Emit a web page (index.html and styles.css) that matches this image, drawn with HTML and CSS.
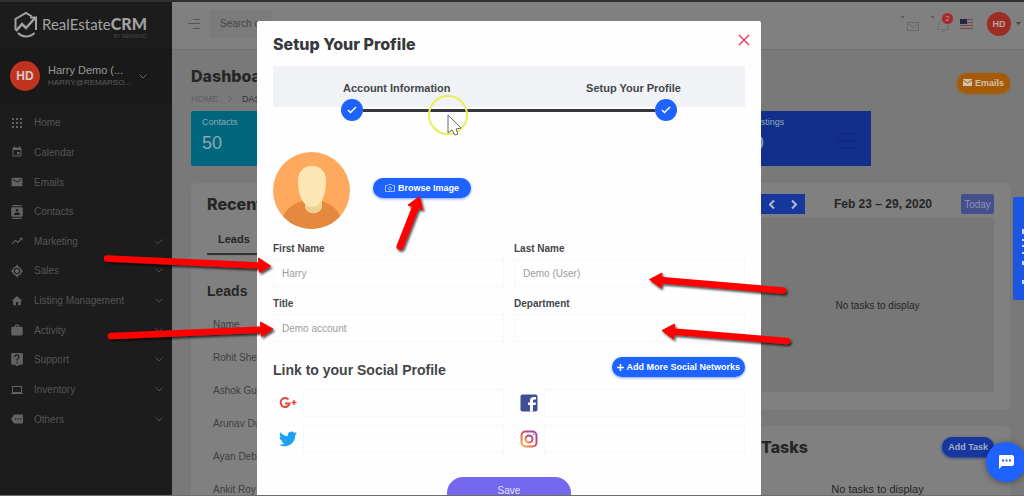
FILE: index.html
```html
<!DOCTYPE html>
<html lang="en">
<head>
  <meta charset="UTF-8">
  <meta name="viewport" content="width=device-width, initial-scale=1.0">
  <title>RealEstateCRM - Dashboard</title>
  <link rel="stylesheet" href="styles.css">
</head>
<body>
  <div class="screen">
    <aside class="sidebar">
      <a class="logo" href="#">
        <svg width="24" height="28" viewBox="0 0 24 28" fill="none" stroke="#a2a2a2" stroke-width="2">
          <path d="M1.5 19V8L12 2l6 3.500M22 10v9M4 22c4 4.500 12 4.500 16.500 0"/>
          <path d="M2 20l6-7 4 4L21 7" stroke-width="2.500"/>
          <path d="M16 6.500h6v6" stroke-width="2"/>
        </svg>
        <span class="logo-text">
          <span class="logo-name">RealEstate<b>CRM</b></span>
          <small>BY REMARSO</small>
        </span>
      </a>
      <div class="user">
        <span class="avatar">HD</span>
        <div class="user-info">
          <div class="user-name">Harry Demo (...</div>
          <div class="user-mail">HARRY@REMARSO...</div>
        </div>
        <svg class="chevron" width="8" height="5" viewBox="0 0 8 5"><path d="M.5.5L4 4 7.500.5"/></svg>
      </div>
      <nav class="menu">
        <a href="#"><svg width="12" height="12" viewBox="0 0 12 12"><path d="M1 1h2v2H1zM5 1h2v2H5zM9 1h2v2H9zM1 5h2v2H1zM5 5h2v2H5zM9 5h2v2H9zM1 9h2v2H1zM5 9h2v2H5zM9 9h2v2H9z"/></svg><span>Home</span></a>
        <a href="#"><svg width="12" height="12" viewBox="0 0 24 24"><path d="M17 12h-5v5h5v-5zM16 1v2H8V1H6v2H5c-1.100 0-2 .9-2 2v14c0 1.100.9 2 2 2h14c1.100 0 2-.9 2-2V5c0-1.100-.9-2-2-2h-1V1h-2zm3 18H5V8h14v11z"/></svg><span>Calendar</span></a>
        <a href="#"><svg width="12" height="12" viewBox="1 2 22 20"><path d="M20 4H4c-1.100 0-2 .9-2 2v12c0 1.100.9 2 2 2h16c1.100 0 2-.9 2-2V6c0-1.100-.9-2-2-2zm0 4l-8 5-8-5V6l8 5 8-5v2z"/></svg><span>Emails</span></a>
        <a href="#"><svg width="12" height="14" viewBox="2 0 20 24"><path d="M20 0H4v2h16V0zM4 24h16v-2H4v2zM20 4H4c-1.100 0-2 .9-2 2v12c0 1.100.9 2 2 2h16c1.100 0 2-.9 2-2V6c0-1.100-.9-2-2-2zm-8 2.750a2.250 2.250 0 110 4.500 2.250 2.250 0 010-4.500zM17 17H7v-1.500c0-1.670 3.330-2.500 5-2.500s5 .83 5 2.500V17z"/></svg><span>Contacts</span></a>
        <a href="#"><svg width="12" height="12" viewBox="1 2 22 20"><path d="M16 6l2.290 2.290-4.880 4.880-4-4L2 16.590 3.410 18l6-6 4 4 6.300-6.290L22 12V6z"/></svg><span>Marketing</span><svg class="chevron" width="8" height="5" viewBox="0 0 8 5"><path d="M.5 2.500L3 4.500 7.500.5"/></svg></a>
        <a href="#"><svg width="12" height="14" viewBox="1 0 22 24"><path fill-rule="evenodd" d="M12 0l3 4c3 1 4 2 5 5l3 3-3 3c-1 3-2 4-5 5l-3 4-3-4c-3-1-4-2-5-5l-3-3 3-3c1-3 2-4 5-5zM12 6a6 6 0 100 12 6 6 0 000-12z"/><circle cx="12" cy="12" r="4"/></svg><span>Sales</span><svg class="chevron" width="8" height="5" viewBox="0 0 8 5"><path d="M.5.5L4 4 7.500.5"/></svg></a>
        <a href="#"><svg width="12" height="12" viewBox="1 2 22 20"><path d="M10 20v-6h4v6h5v-8h3L12 3 2 12h3v8z"/></svg><span>Listing Management</span><svg class="chevron" width="8" height="5" viewBox="0 0 8 5"><path d="M.5.5L4 4 7.500.5"/></svg></a>
        <a href="#"><svg width="12" height="12" viewBox="2 1 20 21"><path d="M20 6h-4V4l-2-2h-4L8 4v2H4c-1 0-2 1-2 2v11c0 1 1 2 2 2h16c1 0 2-1 2-2V8c0-1-1-2-2-2zm-6 0h-4V4h4v2z"/></svg><span>Activity</span><svg class="chevron" width="8" height="5" viewBox="0 0 8 5"><path d="M.5.5L4 4 7.500.5"/></svg></a>
        <a href="#"><svg width="12" height="13" viewBox="3 2 18 20"><path d="M19 2H5c-1.100 0-2 .9-2 2v14c0 1.100.9 2 2 2h4l3 3 3-3h4c1.100 0 2-.9 2-2V4c0-1.100-.9-2-2-2zm-6 16h-2v-2h2v2zm2.070-7.750l-.9.920C13.450 11.900 13 12.500 13 14h-2v-.5c0-1.100.45-2.100 1.170-2.830l1.240-1.260A2 2 0 1010 8H8a4 4 0 118 0c0 .88-.36 1.680-.93 2.250z"/></svg><span>Support</span><svg class="chevron" width="8" height="5" viewBox="0 0 8 5"><path d="M.5.5L4 4 7.500.5"/></svg></a>
        <a href="#"><svg width="12" height="12" viewBox="0 3 24 18"><path d="M20 18c1.100 0 2-.9 2-2V6c0-1.100-.9-2-2-2H4c-1.100 0-2 .9-2 2v10c0 1.100.9 2 2 2H0v2h24v-2h-4zM4 6h16v10H4V6z"/></svg><span>Inventory</span><svg class="chevron" width="8" height="5" viewBox="0 0 8 5"><path d="M.5.5L4 4 7.500.5"/></svg></a>
        <a href="#"><svg width="12" height="12" viewBox="0 3 24 18"><path d="M22 3H7c-.69 0-1.230.35-1.590.88L0 12l5.410 8.110c.36.53.9.89 1.590.89h15c1.100 0 2-.9 2-2V5c0-1.100-.9-2-2-2zM9 13.500a1.500 1.500 0 110-3 1.500 1.500 0 010 3zm5 0a1.500 1.500 0 110-3 1.500 1.500 0 010 3zm5 0a1.500 1.500 0 110-3 1.500 1.500 0 010 3z"/></svg><span>Others</span><svg class="chevron" width="8" height="5" viewBox="0 0 8 5"><path d="M.5.5L4 4 7.500.5"/></svg></a>
      </nav>
    </aside>

    <div class="page">
      <header class="topbar">
        <button class="icon-btn" aria-label="Toggle menu">
          <svg width="13" height="12" viewBox="0 0 13 12" stroke="#555" fill="none"><path d="M5 1.500h7M0 5.500h12M5 10.500h7"/></svg>
        </button>
        <input class="search" type="search" placeholder="Search c" aria-label="Search">
        <div class="topbar-icons">
          <button class="icon-btn" aria-label="Messages">
            <svg width="20" height="20" viewBox="0 0 20 20" fill="none" stroke="#6a6a6a"><path d="M7.500 8.500h11v8h-11zM7.500 9l5.500 4.500L18.500 9"/><path d="M1 3h3" stroke="#444"/></svg>
          </button>
          <button class="icon-btn bell" aria-label="Notifications">
            <svg width="22" height="20" viewBox="0 0 22 20" fill="none" stroke="#6f6f6f"><path d="M7 15.500c2-2 1-6 3-8s6-2 7 0 0 6 2 8zM11.500 17.500h3"/><path d="M1 3h3" stroke="#444"/></svg>
            <span class="badge">2</span>
          </button>
          <svg width="13" height="10" viewBox="0 0 13 10"><path fill="#857c7c" d="M0 0h13v10H0z"/><path stroke="#744a4e" d="M0 .5h13M0 3.500h13M0 6.500h13M0 9.500h13"/><path fill="#22263f" d="M0 0h7v5H0z"/></svg>
          <span class="avatar small">HD</span>
          <svg width="5" height="3" viewBox="0 0 5 3"><path fill="#444" d="M0 0h5L2.500 3z"/></svg>
        </div>
      </header>

      <main class="content">
        <div class="page-head">
          <div>
            <h1>Dashboard</h1>
            <div class="breadcrumb">
              <a href="#">HOME</a>
              <svg width="4" height="7" viewBox="0 0 4 7" fill="none" stroke="#5c5c5c"><path d="M.5.5l3 3-3 3"/></svg>
              <span>DASHBOARD</span>
            </div>
          </div>
          <button class="pill orange">
            <svg width="9" height="7" viewBox="0 0 9 7"><path fill="#cfc3b2" d="M0 0h9v7H0z"/><path fill="none" stroke="#a65a05" d="M0 1l4.500 3L9 1"/></svg>
            Emails
          </button>
        </div>

        <div class="stats">
          <div class="stat teal"><span>Contacts</span><strong>50</strong></div>
          <div class="stat blue">
            <span>Listings</span><strong>0</strong>
            <svg width="20" height="18" viewBox="0 0 20 18" stroke="#11297a" stroke-width="2"><path d="M2 2h18M0 9h20M2 16h18"/></svg>
          </div>
        </div>

        <div class="columns">
          <section class="card recent">
            <h2>Recent</h2>
            <div class="tabs"><button class="tab">Leads</button></div>
            <h3>Leads</h3>
            <table>
              <thead><tr><th>Name</th></tr></thead>
              <tbody>
                <tr><td>Rohit Sheth</td></tr>
                <tr><td>Ashok Gupta</td></tr>
                <tr><td>Arunav Dutta</td></tr>
                <tr><td>Ayan Debnath</td></tr>
                <tr><td>Ankit Roy</td></tr>
              </tbody>
            </table>
          </section>
          <div class="side">
            <section class="card">
              <div class="cal-bar">
                <div class="cal-nav">
                  <button aria-label="Previous week"><svg width="6" height="9" viewBox="0 0 6 9"><path d="M5 .5l-4 4 4 4"/></svg></button>
                  <button aria-label="Next week"><svg width="6" height="9" viewBox="0 0 6 9"><path d="M1 .5l4 4-4 4"/></svg></button>
                </div>
                <span class="cal-title">Feb 23 – 29, 2020</span>
                <button class="today">Today</button>
              </div>
              <div class="cal-body">No tasks to display</div>
            </section>
            <section class="card tasks">
              <div class="tasks-head">
                <h2>Tasks</h2>
                <button class="pill dim">Add Task</button>
              </div>
              <p>No tasks to display</p>
            </section>
          </div>
        </div>
      </main>
    </div>

    <div class="side-tab">
      <svg width="3" height="60" viewBox="0 0 3 60" stroke="#c5d3ff" stroke-width="2"><path d="M2 2v5M2 12v2M2 18v2M1 26h2M2 34v4M2 53v4"/></svg>
    </div>
    <button class="chat" aria-label="Chat">
      <svg width="16" height="14" viewBox="0 0 16 14"><path fill="#fff" d="M2 0h12c1 0 2 1 2 2v7c0 1-1 2-2 2H4l-3 3V2c0-1 0-2 1-2z"/><path stroke="#1e62ff" stroke-width="2" d="M4 5.500h2M7.500 5.500h2M11 5.500h2"/></svg>
    </button>

    <div class="overlay">
      <form class="modal" role="dialog" aria-labelledby="modal-title">
        <div class="modal-head">
          <h2 id="modal-title">Setup Your Profile</h2>
          <button type="button" class="close" aria-label="Close">
            <svg width="12" height="12" viewBox="0 0 12 12" stroke="#e5406b" stroke-width="1.500"><path d="M1 1l10 10M11 1L1 11"/></svg>
          </button>
        </div>

        <div class="steps">
          <div class="step-labels"><span>Account Information</span><span>Setup Your Profile</span></div>
          <div class="track">
            <span class="dot"><svg width="10" height="8" viewBox="0 0 10 8"><path d="M1 4l2.500 2.500L9 1"/></svg></span>
            <span class="line"></span>
            <span class="dot"><svg width="10" height="8" viewBox="0 0 10 8"><path d="M1 4l2.500 2.500L9 1"/></svg></span>
          </div>
        </div>

        <div class="photo">
          <svg width="77" height="77" viewBox="0 0 77 77">
            <defs><clipPath id="round"><circle cx="38.500" cy="38.500" r="38.500"/></clipPath></defs>
            <g clip-path="url(#round)">
              <path fill="#ffa95e" d="M0 0h77v77H0z"/>
              <path fill="#e5893f" d="M8 77c0-18 10-25 24-29h14c14 4 23 11 23 29z"/>
              <path fill="#efd191" d="M32 46h17v10c-3 7-14 7-17 0z"/>
              <path fill="#fbe6b4" d="M25 29c0-9 5-15 14-15s14 6 14 15c0 14-5 26-14 26S25 43 25 29z"/>
            </g>
          </svg>
          <button type="button" class="pill browse">
            <svg width="10" height="8" viewBox="0 0 10 8" fill="none" stroke="#a5c2ff"><path d="M.5 1.500h2l1-1h3l1 1h2v6h-9z"/><circle cx="5" cy="4.500" r="1.500"/></svg>
            Browse Image
          </button>
        </div>

        <div class="fields">
          <div class="field"><label for="first">First Name</label><input id="first" type="text" value="Harry"></div>
          <div class="field"><label for="last">Last Name</label><input id="last" type="text" value="Demo (User)"></div>
          <div class="field"><label for="job">Title</label><input id="job" type="text" value="Demo account"></div>
          <div class="field"><label for="dept">Department</label><input id="dept" type="text"></div>
        </div>

        <div class="social-head">
          <h3>Link to your Social Profile</h3>
          <button type="button" class="pill">
            <svg width="7" height="7" viewBox="0 0 7 7" stroke="#fff" stroke-width="1.500"><path d="M3.500 0v7M0 3.500h7"/></svg>
            Add More Social Networks
          </button>
        </div>

        <div class="socials">
          <label class="social">
            <svg width="18" height="18" viewBox="0 0 18 18" fill="none" stroke="#dd4b39" stroke-width="2"><path d="M9.500 5.500a4.500 4.500 0 10 1 4H6"/><path d="M12.500 8.500h5M15 6v5" stroke-width="1.500"/></svg>
            <input type="text" aria-label="Google Plus">
          </label>
          <label class="social">
            <svg width="18" height="18" viewBox="0 0 18 18"><rect x=".5" y=".5" width="17" height="17" rx="2" fill="#3f4f96"/><path fill="#fff" d="M10 17.500V11H8V8.500h2V7c0-2.500 1-4 4-4h2v2.500h-1.500c-1 0-1.500.500-1.500 1.500v1.500h3L15.500 11H13v6.500z"/></svg>
            <input type="text" aria-label="Facebook">
          </label>
          <label class="social">
            <svg width="18" height="18" viewBox="0 0 24 24"><path fill="#1da1f2" d="M23.950 4.570a10 10 0 01-2.820.77 4.960 4.960 0 002.160-2.720c-.95.55-2 .95-3.130 1.180a4.920 4.920 0 00-8.380 4.480C7.690 8.090 4.070 6.130 1.640 3.160a4.820 4.820 0 00-.67 2.480c0 1.710.87 3.210 2.190 4.100a4.900 4.900 0 01-2.230-.62v.06a4.920 4.920 0 003.950 4.830 5 5 0 01-2.210.08 4.940 4.940 0 004.600 3.420A9.870 9.870 0 010 19.540a13.990 13.990 0 007.550 2.210c9.050 0 14-7.500 14-13.980 0-.21 0-.42-.02-.63a9.940 9.940 0 002.460-2.550z"/></svg>
            <input type="text" aria-label="Twitter">
          </label>
          <label class="social">
            <svg width="18" height="18" viewBox="0 0 18 18" fill="none" stroke="url(#insta)" stroke-width="2"><defs><linearGradient id="insta" x1="0" y1="1" x2="1" y2="0"><stop offset="0" stop-color="#f9b64a"/><stop offset=".5" stop-color="#dc4a62"/><stop offset="1" stop-color="#8a49b8"/></linearGradient></defs><rect x="1.500" y="1.500" width="15" height="15" rx="4"/><circle cx="9" cy="9" r="3.500"/><circle cx="13.500" cy="4.500" r=".5" stroke-width="1"/></svg>
            <input type="text" aria-label="Instagram">
          </label>
        </div>

        <button type="submit" class="save">Save</button>
      </form>
    </div>

    <svg class="marks" width="1024" height="496" viewBox="0 0 1024 496">
      <defs>
        <filter id="shadow" x="-20%" y="-50%" width="140%" height="200%"><feDropShadow dx="1.500" dy="2" stdDeviation="1" flood-color="#000" flood-opacity=".7"/></filter>
      </defs>
      <circle cx="448" cy="115" r="19" fill="none" stroke="#e9ee5c" stroke-width="2"/>
      <path d="M448 115v18l4-3 3 5 3-1-2-5 5-1z" fill="#fff" stroke="#666"/>
      <g fill="#fe0000" stroke="#fe0000" stroke-linejoin="round" filter="url(#shadow)">
        <g><path d="M107 258.500L260 265.500" stroke-width="6.500" stroke-linecap="round"/><path d="M270.500 266l-12-8 1 14.500z"/></g>
        <g><path d="M111 336L263 329.500" stroke-width="6.500" stroke-linecap="round"/><path d="M273 329l-12.500-7 1 14.500z"/></g>
        <g><path d="M400 246.500L415.500 207" stroke-width="7" stroke-linecap="round"/><path d="M419.500 196.500l-11.500 8.500 14.500 4.500z"/></g>
        <g><path d="M783 290.500L660 280" stroke-width="6.500" stroke-linecap="round"/><path d="M649.500 279.500l12.500-6.500-1 15z"/></g>
        <g><path d="M787 341L673 331.500" stroke-width="6.500" stroke-linecap="round"/><path d="M662 330.500l12.500-6.500-1 15z"/></g>
      </g>
    </svg>
  </div>
</body>
</html>
```
FILE: styles.css
```css
* {
  box-sizing: border-box;
}
body {
  margin: 0;
  font-family: "Liberation Sans", Arial, sans-serif;
  font-size: 10px;
  color: #262626;
}
h1, h2, h3, p {
  margin: 0;
}
h1, h2 {
  font-family: Inter, "Liberation Sans", sans-serif;
  font-weight: 800;
  font-size: 16px;
  line-height: 20px;
}
button {
  font-family: inherit;
  border: none;
  padding: 0;
  background: none;
  cursor: pointer;
}
a {
  color: inherit;
  text-decoration: none;
}
svg {
  flex-shrink: 0;
  display: block;
}
.screen {
  position: relative;
  display: flex;
  height: 100vh;
  overflow: hidden;
  border-top: 2px solid #303030;
  border-bottom: 1px solid #6c6c6c;
  background: #797979;
}

/* sidebar */
.sidebar {
  width: 172px;
  flex-shrink: 0;
  background: #1c1c1c;
}
.logo {
  display: flex;
  gap: 4px;
  height: 46px;
  padding: 9px 0 0 14px;
  color: #a2a2a2;
}
.logo-text {
  display: flex;
  flex-direction: column;
  padding-top: 3px;
}
.logo-name {
  font-family: Lato, sans-serif;
  font-size: 15px;
  line-height: 20px;
}
.logo-name b {
  font-size: 16px;
  font-weight: 900;
}
.logo small {
  font-size: 5px;
  line-height: 4px;
  text-align: right;
  color: #4a4a4a;
}
.user {
  display: flex;
  align-items: center;
  height: 56px;
  padding: 0 25px 0 10px;
  background: #191919;
}
.avatar {
  display: flex;
  align-items: center;
  justify-content: center;
  width: 30px;
  height: 30px;
  border-radius: 50%;
  background: #bf3320;
  color: #d8c8c4;
  font-size: 12px;
  font-weight: bold;
}
.avatar.small {
  width: 24px;
  height: 24px;
  font-size: 9px;
  background: #9c2c24;
  color: #b9a5a2;
}
.user-info {
  flex: 1;
  padding-left: 8px;
}
.user-name {
  font-size: 11px;
  line-height: 14px;
  color: #9a9a9a;
}
.user-mail {
  font-size: 8px;
  line-height: 12px;
  color: #5c5c5c;
}
.chevron {
  fill: none;
  stroke: #6a6a6a;
}
.menu {
  display: grid;
  grid-auto-rows: 1fr;
  height: 326px;
  margin-top: 4px;
}
.menu a {
  display: flex;
  align-items: center;
  gap: 11px;
  padding: 0 9px 0 11px;
  color: #555;
  fill: #626262;
}
.menu span {
  flex: 1;
}
.menu .chevron {
  fill: none;
  stroke: #505050;
}

/* top bar */
.page {
  flex: 1;
  min-width: 0;
}
.topbar {
  display: flex;
  align-items: center;
  height: 48px;
  padding: 0 3px 4px 16px;
  background: #808080;
  border-bottom: 1px solid #6f6f6f;
}
.icon-btn {
  position: relative;
}
.search {
  width: 64px;
  height: 28px;
  margin-left: 8px;
  padding: 0 0 0 11px;
  border: none;
  border-radius: 4px;
  background: #7b7b7b;
  font-family: inherit;
  font-size: 10px;
}
.search::placeholder {
  color: #444;
}
.topbar-icons {
  display: flex;
  align-items: center;
  gap: 10px;
  margin-left: auto;
}
.topbar-icons .avatar {
  margin: 0 -5px 0 4px;
}
.bell {
  margin-right: -2px;
}
.badge {
  position: absolute;
  top: -1px;
  right: -1px;
  width: 11px;
  height: 11px;
  border-radius: 50%;
  background: #a8272b;
  color: #b98;
  font-size: 8px;
  line-height: 11px;
}

/* dashboard */
.content {
  padding: 16px 14px 0 19px;
}
.page-head {
  display: flex;
  align-items: center;
  justify-content: space-between;
}
.breadcrumb {
  display: flex;
  align-items: center;
  gap: 10px;
  height: 25px;
  font-size: 9px;
  color: #333;
}
.breadcrumb a {
  color: #606060;
}
.pill {
  display: flex;
  align-items: center;
  justify-content: center;
  gap: 3px;
  height: 20px;
  padding: 0 6px;
  border-radius: 10px;
  background: #1e62ff;
  box-shadow: 0 1px 3px rgba(30, 98, 255, .6);
  color: #fff;
  font-size: 9px;
  font-weight: bold;
}
.pill.orange {
  margin-bottom: 12px;
  background: #a65a05;
  box-shadow: 0 1px 3px #a65a05;
  color: #cfc3b2;
}
.pill.dim {
  background: #15379e;
  box-shadow: 0 1px 3px #15379e;
  color: #a5aec8;
}
.stats {
  display: grid;
  grid-template-columns: repeat(5, 1fr);
  gap: 10px;
  width: 83%;
}
.stat {
  position: relative;
  display: flex;
  flex-direction: column;
  gap: 3px;
  height: 55px;
  padding: 6px 11px;
  font-size: 9px;
  color: #8fa9b0;
}
.stat strong {
  font-size: 18px;
  font-weight: normal;
  line-height: 26px;
}
.stat svg {
  position: absolute;
  right: 14px;
  bottom: 16px;
}
.teal {
  background: #00667d;
  border-radius: 2px;
}
.blue {
  grid-column: 5;
  background: #122f8c;
}
.columns {
  display: grid;
  grid-template-columns: 2fr 1fr;
  gap: 24px;
  margin-top: 17px;
}
.card {
  padding: 11px 16px 18px;
  border-radius: 6px;
  background: #808080;
}
.recent {
  height: 330px;
}
.tabs {
  display: flex;
  margin-top: 10px;
  border-bottom: 1px solid #777;
}
.tab {
  height: 31px;
  padding: 0 11px;
  border-bottom: 2px solid #333;
  font-size: 11px;
  font-weight: bold;
  color: #262626;
}
.recent h3 {
  margin-top: 26px;
  font-size: 14px;
  line-height: 18px;
}
.recent table {
  width: 100%;
  margin-top: 8px;
  border-collapse: collapse;
}
.recent th, .recent td {
  height: 33px;
  padding: 0 6px;
  text-align: left;
  font-weight: normal;
  color: #3f3f3f;
}
.side {
  display: flex;
  flex-direction: column;
  gap: 16px;
}
.cal-bar {
  display: flex;
  align-items: center;
  justify-content: space-between;
  padding-bottom: 4px;
}
.cal-nav {
  display: flex;
}
.cal-nav button {
  display: flex;
  align-items: center;
  justify-content: center;
  width: 22px;
  height: 20px;
  background: #15379e;
}
.cal-nav path {
  fill: none;
  stroke: #b3b9cc;
  stroke-width: 2;
}
.cal-title {
  font-size: 12px;
  font-weight: bold;
}
.today {
  width: 33px;
  height: 20px;
  border-radius: 2px;
  background: #444f8c;
  color: #8d93b4;
  font-size: 10px;
}
.cal-body {
  display: flex;
  align-items: center;
  justify-content: center;
  height: 174px;
  background: #777;
}
.tasks-head {
  display: flex;
  align-items: center;
  justify-content: space-between;
}
.tasks p {
  margin-top: 26px;
  text-align: center;
  font-size: 11px;
}
.side-tab {
  position: absolute;
  top: 195px;
  right: 0;
  width: 11px;
  height: 103px;
  padding: 30px 0 0 8px;
  border-radius: 2px 0 0 2px;
  background: #1c56e0;
}
.chat {
  position: absolute;
  right: -2px;
  bottom: 13px;
  display: flex;
  align-items: center;
  justify-content: center;
  width: 40px;
  height: 40px;
  border-radius: 50%;
  background: #1e62ff;
  box-shadow: 0 1px 6px rgba(0, 0, 0, .4);
}

/* profile dialog */
.overlay {
  position: absolute;
  inset: 0;
  display: flex;
  justify-content: center;
  align-items: flex-start;
  padding: 19px 6px 0 0;
}
.modal {
  width: 100%;
  max-width: 504px;
  padding: 13px 16px 24px;
  border-radius: 2px;
  background: #fefefe;
  color: #44464a;
}
.modal-head {
  display: flex;
  justify-content: space-between;
}
.modal-head h2 {
  color: #38393d;
}
.close {
  align-self: flex-start;
  margin-right: -5px;
}
.steps {
  display: flow-root;
  margin-top: 12px;
  padding: 14px 68px 0;
  background: #f0f2f5;
}
.step-labels {
  display: flex;
  justify-content: space-between;
  margin-right: -4px;
  padding-left: 2px;
  font-size: 11px;
  font-weight: bold;
  line-height: 16px;
}
.track {
  display: flex;
  align-items: center;
  margin: 3px 0 -14px;
}
.dot {
  display: flex;
  align-items: center;
  justify-content: center;
  width: 22px;
  height: 22px;
  border-radius: 50%;
  background: #1e62ff;
}
.dot path {
  fill: none;
  stroke: #fff;
  stroke-width: 1.5;
}
.line {
  flex: 1;
  height: 3px;
  background: #34363c;
}
.photo {
  display: flex;
  align-items: center;
  gap: 23px;
  margin-top: 45px;
}
.browse {
  padding: 0 12px;
  margin-bottom: 5px;
}
.fields {
  display: grid;
  grid-template-columns: 1fr 1fr;
  gap: 10px;
  margin-top: 13px;
}
.field label {
  display: block;
  margin-bottom: 3px;
  font-weight: bold;
  line-height: 14px;
}
.field input, .social input {
  width: 100%;
  height: 28px;
  padding: 0 8px;
  border: 1px solid #f7f7f8;
  background: none;
  color: #9b9ba0;
  font-family: inherit;
  font-size: 10px;
}
.social-head {
  display: flex;
  align-items: center;
  justify-content: space-between;
  margin-top: 13px;
}
.social-head h3 {
  padding-top: 6px;
  font-size: 14px;
  line-height: 18px;
}
.social-head .pill {
  gap: 2px;
  padding: 0 5px;
}
.socials {
  display: grid;
  grid-template-columns: 1fr 1fr;
  gap: 8px 10px;
  margin-top: 10px;
}
.social {
  display: flex;
  align-items: center;
  gap: 6px;
  padding-left: 6px;
}
.social input {
  min-width: 0;
}
.save {
  display: block;
  width: 124px;
  height: 34px;
  margin: 24px auto 0;
  padding-bottom: 8px;
  border-radius: 16px;
  background: #7468ee;
  color: #e4e0ff;
  font-size: 10px;
}

/* arrows and pointer above the page */
.marks {
  position: absolute;
  top: -2px;
  left: 0;
  pointer-events: none;
}
```
